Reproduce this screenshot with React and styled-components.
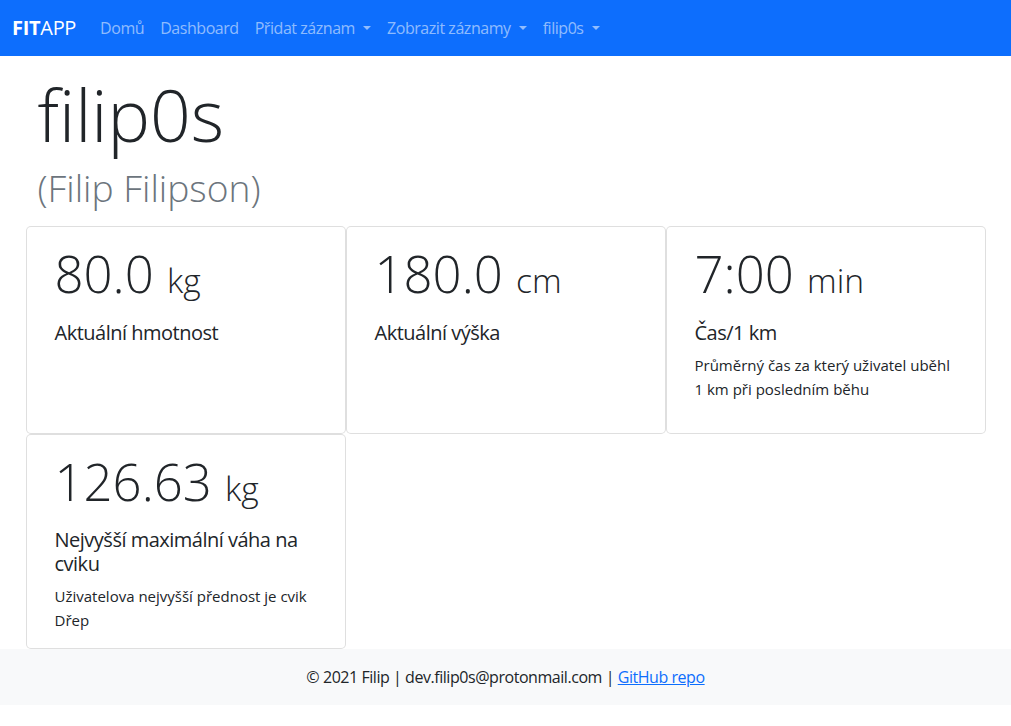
import styled, { createGlobalStyle } from 'styled-components';

const FONT = '"Open Sans", "Noto Sans", "DejaVu Sans", sans-serif';

const COLORS = {
  Primary: '#0d6efd',
  Text: '#212529',
  Muted: '#6c757d',
  Border: 'rgba(0, 0, 0, 0.125)',
  Light: '#f8f9fa',
};

const GlobalStyle = createGlobalStyle`
  *, *::before, *::after {
    box-sizing: border-box;
  }

  body {
    margin: 0;
    font-family: ${FONT};
    font-size: 1rem;
    line-height: 1.5;
    color: ${COLORS.Text};
    background: #fff;
  }
`;

const NAV_ITEMS = [
  { label: 'Domů' },
  { label: 'Dashboard' },
  { label: 'Přidat záznam', dropdown: true },
  { label: 'Zobrazit záznamy', dropdown: true },
  { label: 'filip0s', dropdown: true },
];

const STATS = [
  { value: '80.0', unit: 'kg', title: 'Aktuální hmotnost' },
  { value: '180.0', unit: 'cm', title: 'Aktuální výška' },
  {
    value: '7:00',
    unit: 'min',
    title: 'Čas/1 km',
    text: 'Průměrný čas za který uživatel uběhl 1 km při posledním běhu',
    spaced: true,
  },
  {
    value: '126.63',
    unit: 'kg',
    title: 'Nejvyšší maximální váha na cviku',
    text: 'Uživatelova nejvyšší přednost je cvik Dřep',
  },
];

function App() {
  return (
    <>
      <GlobalStyle />
      <Navbar>
        <Brand href="#">
          <strong>FIT</strong>APP
        </Brand>
        <NavList>
          {NAV_ITEMS.map((item) => (
            <NavLink key={item.label} href="#" $dropdown={item.dropdown}>
              {item.label}
            </NavLink>
          ))}
        </NavList>
      </Navbar>

      <Main>
        <Username>filip0s</Username>
        <FullName>(Filip Filipson)</FullName>

        <CardGrid>
          {STATS.map((stat) => (
            <Card key={stat.title}>
              <Value>
                {stat.value} <Unit>{stat.unit}</Unit>
              </Value>
              <CardTitle>{stat.title}</CardTitle>
              {stat.text && (
                <CardText $spaced={stat.spaced}>{stat.text}</CardText>
              )}
            </Card>
          ))}
        </CardGrid>
      </Main>

      <Footer>
        © 2021 Filip | dev.filip0s@protonmail.com |{' '}
        <FooterLink href="#">GitHub repo</FooterLink>
      </Footer>
    </>
  );
}

const Navbar = styled.nav`
  display: flex;
  align-items: center;
  height: 56px;
  padding: 8px 12px;
  background: ${COLORS.Primary};
`;

const Brand = styled.a`
  margin-right: 16px;
  padding: 5px 0;
  font-size: 1.25rem;
  line-height: 1.5;
  letter-spacing: -0.3px;
  color: #fff;
  text-decoration: none;

  strong {
    font-weight: 700;
  }
`;

const NavList = styled.div`
  display: flex;
  align-items: center;
`;

const NavLink = styled.a`
  padding: 8px;
  color: rgba(255, 255, 255, 0.55);
  letter-spacing: -0.45px;
  text-decoration: none;
  white-space: nowrap;

  &::after {
    content: ${(p) => (p.$dropdown ? '""' : 'none')};
    display: inline-block;
    margin-left: 0.5em;
    vertical-align: 0.255em;
    border-top: 0.3em solid;
    border-right: 0.3em solid transparent;
    border-left: 0.3em solid transparent;
  }
`;

const Main = styled.main`
  max-width: 960px;
  margin: 0 auto;
  padding: 16px 12px 0;
`;

const Username = styled.h1`
  margin: 0 0 8px;
  font-size: 71.5px;
  font-weight: 300;
  line-height: 1.2;
`;

const FullName = styled.p`
  margin: 0 0 16px;
  font-size: 37.2px;
  font-weight: 300;
  line-height: 1.2;
  color: ${COLORS.Muted};
`;

const CardGrid = styled.div`
  display: grid;
  grid-template-columns: repeat(3, 1fr);
  margin: 0 -12px;
`;

const Card = styled.div`
  display: flex;
  flex-direction: column;
  padding: 16px 28px;
  background: #fff;
  border: 1px solid ${COLORS.Border};
  border-radius: 5px;
`;

const Value = styled.div`
  margin-bottom: 16px;
  font-size: 50.9px;
  font-weight: 300;
  line-height: 1.2;
`;

const Unit = styled.span`
  font-size: 0.66em;
`;

const CardTitle = styled.h5`
  margin: 0 0 8px;
  font-size: 1.25rem;
  font-weight: 500;
  line-height: 1.2;
  letter-spacing: -0.5px;
`;

const CardText = styled.p`
  margin: 0 0 ${(p) => (p.$spaced ? '16px' : '0')};
  font-size: 15px;
  line-height: 24px;
`;

const Footer = styled.footer`
  padding: 16px 0;
  background: ${COLORS.Light};
  text-align: center;
  letter-spacing: -0.45px;
`;

const FooterLink = styled.a`
  color: ${COLORS.Primary};
  text-decoration: underline;
`;

export default App;
